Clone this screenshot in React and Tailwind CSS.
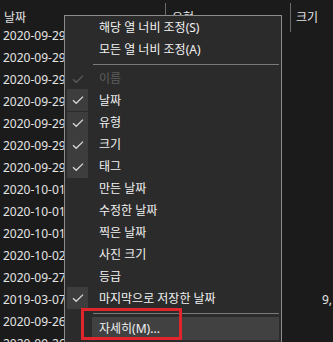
import React from 'react';

const rows = [
  ['2020-09-29', ''],
  ['2020-09-29', ''],
  ['2020-09-29', ''],
  ['2020-09-29', ''],
  ['2020-09-29', ''],
  ['2020-09-29', ''],
  ['2020-09-29', ''],
  ['2020-10-01', ''],
  ['2020-10-01', ''],
  ['2020-10-01', ''],
  ['2020-10-02', ''],
  ['2020-09-27', ''],
  ['2019-03-07', '9,'],
  ['2020-09-26', ''],
  ['2020-09-26', ''],
];

const columns = [
  { label: '이름', checked: true, disabled: true },
  { label: '날짜', checked: true },
  { label: '유형', checked: true },
  { label: '크기', checked: true },
  { label: '태그', checked: true },
  { label: '만든 날짜' },
  { label: '수정한 날짜' },
  { label: '찍은 날짜' },
  { label: '사진 크기' },
  { label: '등급' },
  { label: '마지막으로 저장한 날짜', checked: true },
];

const Check = ({ disabled }) => (
  <svg width="12" height="10" viewBox="0 0 12 10" fill="none">
    <path
      d="M1 5.2L4.2 8.3L11 1.6"
      stroke={disabled ? '#5c5c5c' : '#d6d6d6'}
      strokeWidth="1.3"
    />
  </svg>
);

const MenuItem = ({ label, checked, disabled, prevChecked }) => (
  <div className="flex h-[22px] items-center">
    <div className="flex w-[34px] h-full items-center pl-[2px]">
      <div
        className={`flex w-[21px] items-center justify-center ${
          checked && !disabled ? 'bg-[#3d3d3d]' : ''
        } ${checked && !disabled && !prevChecked ? 'h-[22px] mt-[-2px]' : 'h-full'}`}
      >
        {checked && <Check disabled={disabled} />}
      </div>
    </div>
    <span className={disabled ? 'text-[#5e5e5e]' : 'text-[#f2f2f2]'}>{label}</span>
  </div>
);

const Separator = () => (
  <div className="flex h-[7px] items-center pl-[28px] pr-[2px]">
    <div className="h-px w-full bg-[#7a7a7a]" />
  </div>
);

export default function App() {
  return (
    <div
      className="relative w-[333px] h-[342px] overflow-hidden bg-[#1b1b1b] text-[12px] text-[#e4e4e4]"
      style={{ fontFamily: '"Noto Sans", "Noto Sans CJK KR", sans-serif' }}
    >
      <div className="flex h-[25px] leading-[16px]">
        <div className="w-[165px] pt-[10px] pl-[4px]">날짜</div>
        <div className="mt-[3px] h-[13px] w-px bg-[#6a6a6a]" />
        <div className="w-[124px] pt-[10px] pl-[6px]">유형</div>
        <div className="mt-[3px] h-[29px] w-px bg-[#6a6a6a]" />
        <div className="flex-1 pt-[10px] pl-[5px]">크기</div>
      </div>
      {rows.map(([date, size], i) => (
        <div key={i} className="flex h-[22px] items-center">
          <div className="w-[290px] pl-[3px]">{date}</div>
          <div className="flex-1 pl-[32px]">{size}</div>
        </div>
      ))}

      <div className="absolute left-[64px] top-[15px] w-[218px] h-[340px] border border-[#8c8c8c] bg-[#2b2b2b] pt-[1px]">
        <div className="flex h-[22px] items-center pl-[34px] text-[#f2f2f2]">해당 열 너비 조정(S)</div>
        <div className="flex h-[22px] items-center pl-[34px] text-[#f2f2f2]">모든 열 너비 조정(A)</div>
        <Separator />
        {columns.map((c, i) => (
          <MenuItem
            key={c.label}
            {...c}
            prevChecked={i > 0 && columns[i - 1].checked && !columns[i - 1].disabled}
          />
        ))}
        <Separator />
        <div className="ml-[27px] mr-[2px] flex h-[23px] items-center bg-[#414141] pl-[7px] text-[#f2f2f2]">
          자세히(M)...
        </div>
      </div>

      <div className="absolute left-[81px] top-[308px] h-[32px] w-[101px] border-[3px] border-[#e0262c]" />
    </div>
  );
}
